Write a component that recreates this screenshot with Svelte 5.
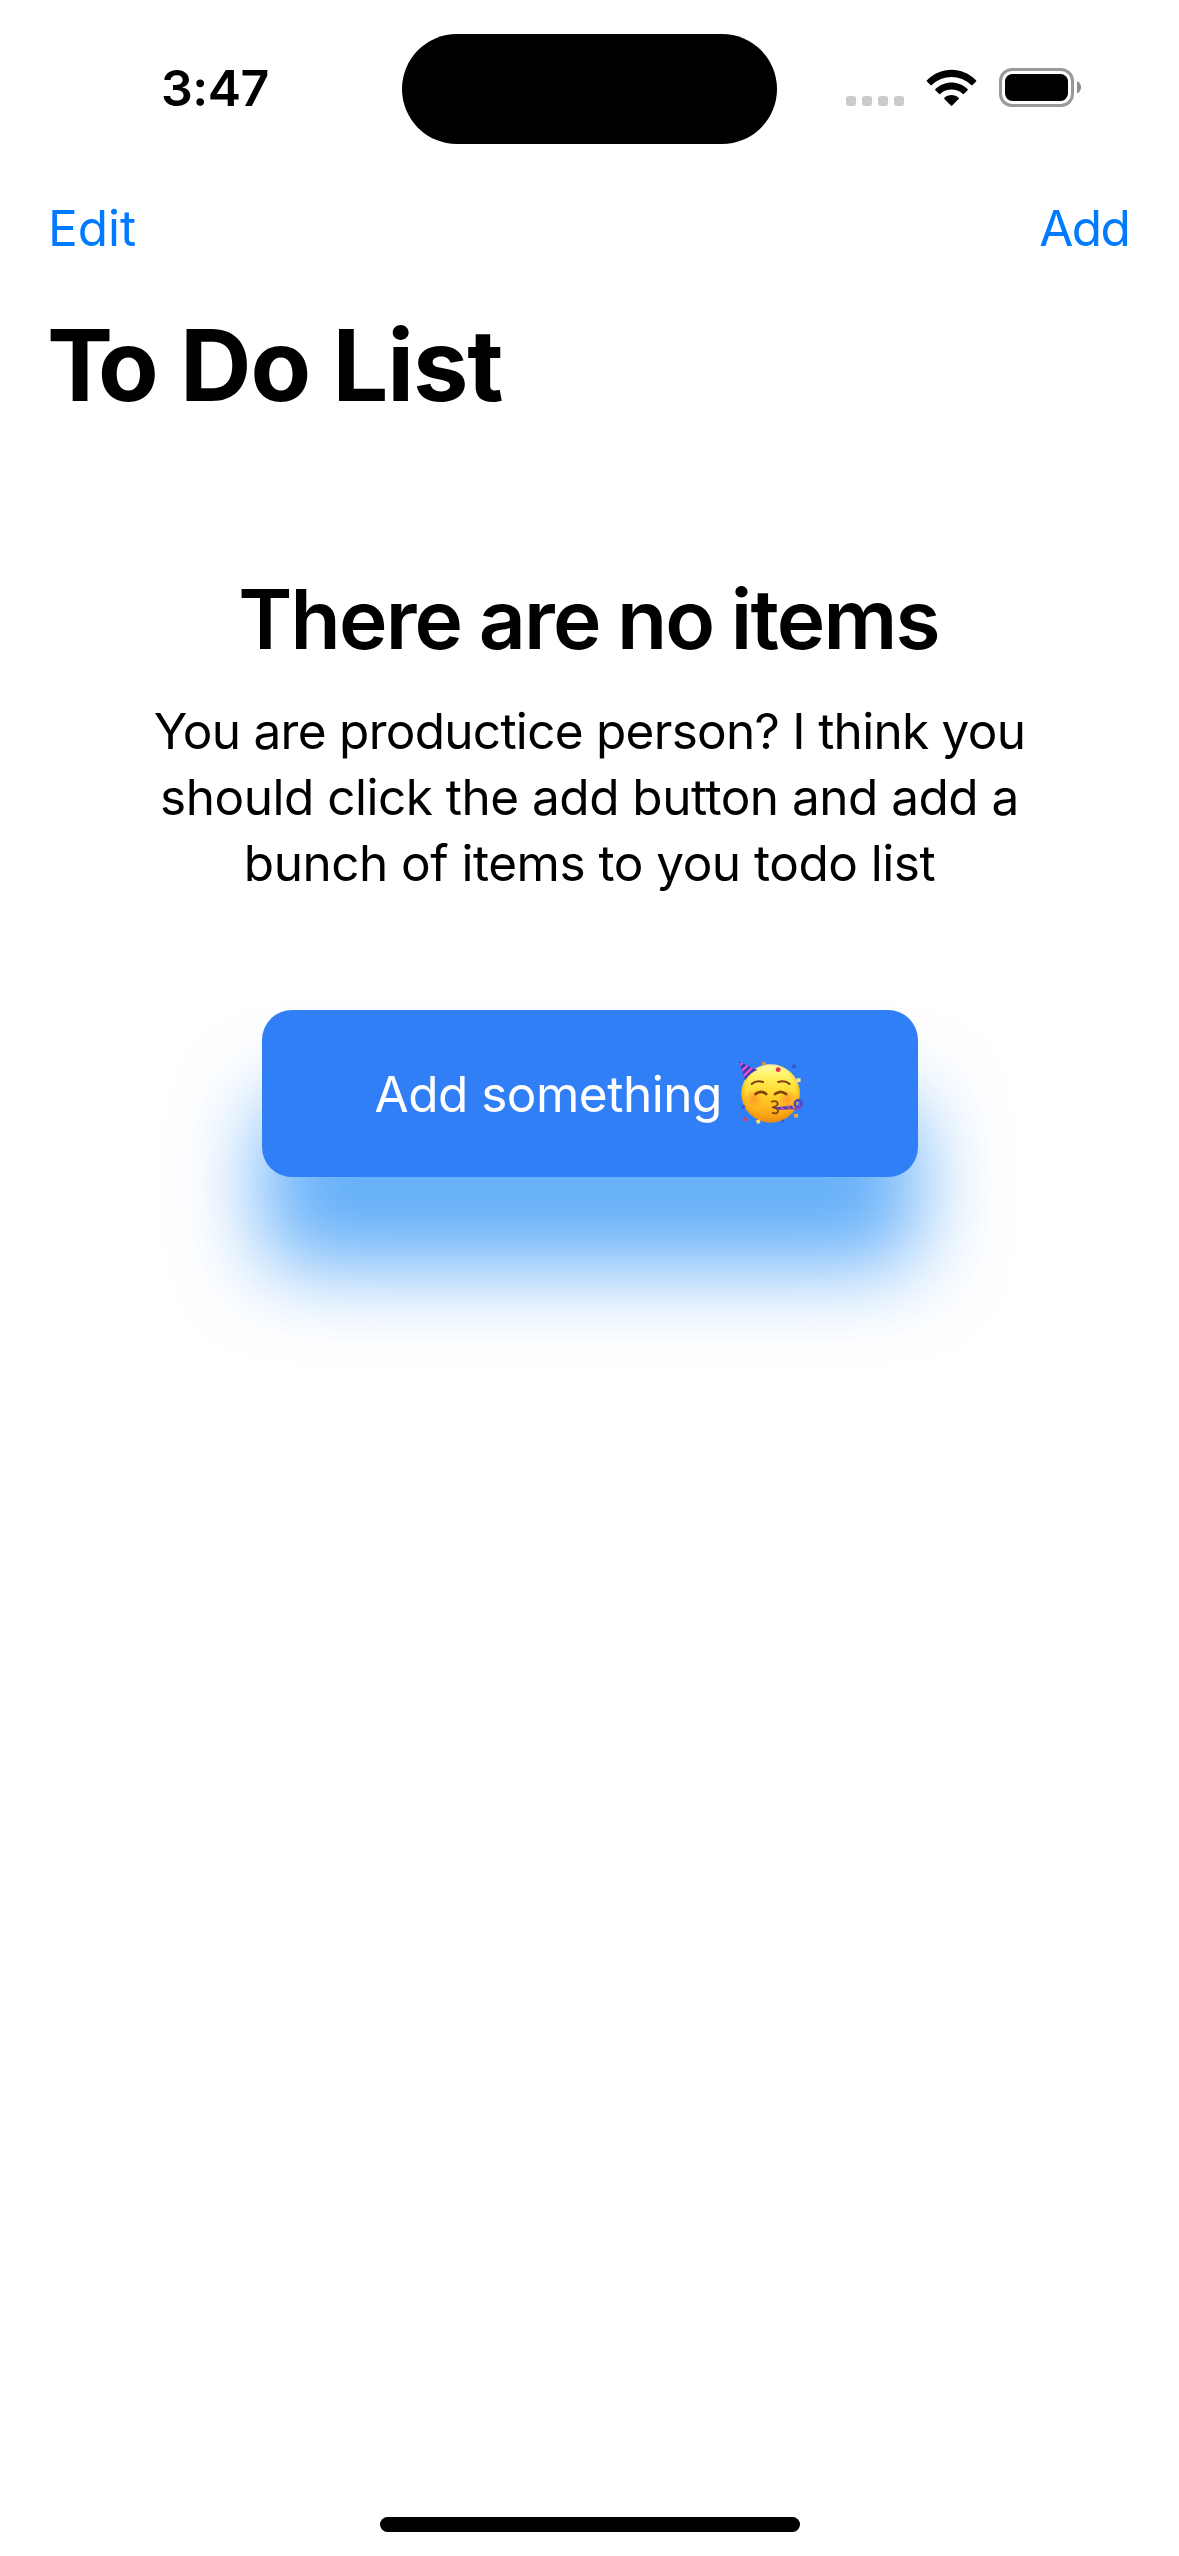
<script>
  const lines = [
    { text: 'You are productice person? I think you', tight: true },
    { text: 'should click the add button and add a', tight: false },
    { text: 'bunch of items to you todo list', tight: false }
  ];
</script>

<main class="screen">
  <header class="status">
    <div class="side left"><time class="clock">3:47</time></div>
    <div class="island"></div>
    <div class="side right">
      <div class="dots"><i></i><i></i><i></i><i></i></div>
      <svg class="wifi" viewBox="0 0 51 38" aria-label="Wi-Fi">
        <path d="M1 11.2C14.7-2.8 36.3-2.8 50 11.2Q50.7 11.9 50 12.6L46.6 16Q45.9 16.7 45.2 16C34.2 5.300 16.800 5.300 5.800 16Q5.100 16.700 4.400 16L1 12.600Q.3 11.900 1 11.200Z" />
        <path d="M9.500 20C18.200 11.200 32.800 11.200 41.500 20Q42.200 20.700 41.500 21.400L38 24.800Q37.300 25.500 36.600 24.800C30.400 19.200 20.600 19.200 14.400 24.800Q13.700 25.500 13 24.800L9.500 21.400Q8.800 20.700 9.500 20Z" />
        <path d="M18.400 28.700C22.300 25.100 28.700 25.100 32.600 28.700Q33.300 29.400 32.600 30.100L26.200 36.600Q25.500 37.300 24.800 36.600L18.400 30.100Q17.700 29.400 18.400 28.700Z" />
      </svg>
      <svg class="battery" viewBox="0 0 83 39" aria-label="Battery full">
        <rect x="1.500" y="1.500" width="72" height="36" rx="11.500" fill="none" stroke="#999" stroke-width="3" />
        <rect x="6" y="6" width="63" height="27" rx="7.500" />
        <path d="M78 13.200Q82 15 82 19.300Q82 23.600 78 25.600Z" fill="#8c8c8c" />
      </svg>
    </div>
  </header>

  <nav class="toolbar">
    <button class="link edit">Edit</button>
    <button class="link add">Add</button>
  </nav>

  <h1><span class="kern">T</span>o Do List</h1>

  <section class="empty">
    <h2>There are no items</h2>
    <p>
      {#each lines as line}<span class:tight={line.tight}>{line.text}</span>{/each}
    </p>
    <button class="cta">
      <span class="label">Add something</span>
      <svg class="emoji" viewBox="57 32 195 195" role="img" aria-label="Partying face">
        <defs>
          <linearGradient id="face" x1="0" y1="0" x2="0" y2="1">
            <stop offset="0" stop-color="#fffbb0" />
            <stop offset=".18" stop-color="#fff36a" />
            <stop offset=".48" stop-color="#ffd92f" />
            <stop offset=".75" stop-color="#ffb71c" />
            <stop offset="1" stop-color="#f0900f" />
          </linearGradient>
          <radialGradient id="rim" cx=".5" cy=".46" r=".54">
            <stop offset=".78" stop-color="#f39a12" stop-opacity="0" />
            <stop offset="1" stop-color="#ec8a08" stop-opacity=".75" />
          </radialGradient>
          <radialGradient id="blush">
            <stop offset="0" stop-color="#ff7a2e" stop-opacity=".6" />
            <stop offset="1" stop-color="#ff7a2e" stop-opacity="0" />
          </radialGradient>
          <clipPath id="hat"><path d="M60 39L113 64Q93 71 78 94Z" /></clipPath>
        </defs>
        <circle cx="152" cy="132" r="85" fill="url(#face)" />
        <circle cx="152" cy="132" r="85" fill="url(#rim)" />
        <circle cx="103" cy="148" r="27" fill="url(#blush)" />
        <circle cx="201" cy="148" r="27" fill="url(#blush)" />
        <g clip-path="url(#hat)">
          <rect x="55" y="35" width="65" height="65" fill="#443bb5" />
          <path d="M58 54L75 39M62 72L91 45M67 87L105 51" stroke="#e45bd0" stroke-width="6" />
        </g>
        <g fill="none" stroke="#80400c" stroke-linecap="round" stroke-linejoin="round">
          <path d="M97 105Q110 93 130 99M174 99Q194 93 207 105" stroke-width="6" />
          <path d="M108 134Q123 121 139 134M165 134Q181 121 197 134" stroke-width="8" />
          <path d="M155 156Q170 152 173 162Q172 169 158 173Q172 175 174 183Q172 193 158 189" stroke-width="5" />
        </g>
        <path d="M160 173L215 167L219 178L178 180Z" fill="#5340b8" />
        <path d="M183 170L188 179M202 168L207 178" stroke="#c64fb4" stroke-width="5" />
        <circle cx="232" cy="162" r="10" fill="none" stroke="#4f46c4" stroke-width="7" />
        <path d="M216 176Q235 180 241 168" fill="none" stroke="#8a48bb" stroke-width="6" />
        <circle cx="174" cy="63" r="7" fill="#e6304d" />
        <path d="M126 43L134 40L140 48L130 52Z" fill="#e6953c" />
        <path d="M227 88L239 88L239 99L228 99Z" fill="#f4ee72" />
        <path d="M220 192L232 191L232 202L221 203Z" fill="#f5a63b" />
        <path d="M109 210L121 208L122 218L113 221Z" fill="#efe45a" />
        <path d="M70 207L78 200L86 208L79 216Z" fill="#c5427e" />
        <circle cx="220" cy="53" r="6" fill="#3c56c8" />
        <circle cx="72" cy="171" r="6" fill="#3c56c8" />
        <circle cx="187" cy="212" r="4" fill="#3c56c8" />
      </svg>
    </button>
  </section>

  <div class="home"></div>
</main>

<style>
  :global(body) {
    margin: 0;
    background: #fff;
  }
  .screen {
    box-sizing: border-box;
    width: 1179px;
    height: 2556px;
    display: flex;
    flex-direction: column;
    background: #fff;
    color: #000;
    font-family: Inter, 'Liberation Sans', sans-serif;
    overflow: hidden;
  }
  button {
    border: 0;
    background: none;
    padding: 0;
    margin: 0;
    font: inherit;
    color: inherit;
  }
  .status {
    display: flex;
    height: 144px;
    flex: none;
  }
  .side {
    flex: 1;
    display: flex;
  }
  .clock {
    margin: 58px 0 0 161px;
    font-size: 50px;
    line-height: 60px;
    font-weight: 600;
    letter-spacing: -0.5px;
  }
  .island {
    flex: none;
    width: 375px;
    height: 110px;
    margin-top: 34px;
    border-radius: 55px;
    background: #000;
  }
  .dots {
    display: flex;
    gap: 6px;
    margin: 96px 0 0 69px;
  }
  .dots i {
    width: 10px;
    height: 10px;
    border-radius: 3px;
    background: #ccc;
  }
  .wifi {
    width: 51px;
    height: 38px;
    margin: 69px 0 0 22px;
    flex: none;
  }
  .battery {
    width: 83px;
    height: 39px;
    margin: 68px 0 0 22px;
    flex: none;
  }
  .toolbar {
    display: flex;
    justify-content: space-between;
    flex: none;
    padding: 54px 50px 0 48px;
  }
  .link {
    color: #007aff;
    font-size: 49.500px;
    line-height: 60px;
  }
  .edit {
    letter-spacing: 0;
  }
  .add {
    letter-spacing: -1.700px;
  }
  h1 {
    margin: 47px 0 0 47px;
    flex: none;
    font-size: 99px;
    line-height: 120px;
    font-weight: 700;
    letter-spacing: -1.100px;
    white-space: nowrap;
  }
  .kern {
    letter-spacing: -15px;
  }
  .empty {
    flex: none;
    display: flex;
    flex-direction: column;
    align-items: center;
  }
  h2 {
    margin: 145px 2px 0 0;
    font-size: 82px;
    line-height: 100px;
    font-weight: 600;
    letter-spacing: -1.800px;
    word-spacing: -1.500px;
    white-space: nowrap;
  }
  p {
    margin: 28px 0 0;
    display: flex;
    flex-direction: column;
    align-items: center;
    font-size: 49.500px;
    line-height: 66px;
    letter-spacing: -0.5px;
    white-space: nowrap;
  }
  .tight {
    letter-spacing: -0.720px;
  }
  .cta {
    display: flex;
    align-items: center;
    box-sizing: border-box;
    width: 656px;
    height: 167px;
    margin-top: 114px;
    padding-left: 113px;
    gap: 18px;
    border-radius: 30px;
    background: #317ff6;
    color: #fff;
    font-size: 49.500px;
    letter-spacing: -0.5px;
    white-space: nowrap;
    box-shadow: 0 90px 84px rgba(0, 124, 246, 0.61);
  }
  .label {
    width: 345px;
  }
  .emoji {
    width: 67px;
    height: 67px;
    flex: none;
    margin-bottom: 2px;
  }
  .home {
    width: 420px;
    height: 15px;
    flex: none;
    margin: auto auto 24px;
    border-radius: 7.500px;
    background: #000;
  }
</style>
